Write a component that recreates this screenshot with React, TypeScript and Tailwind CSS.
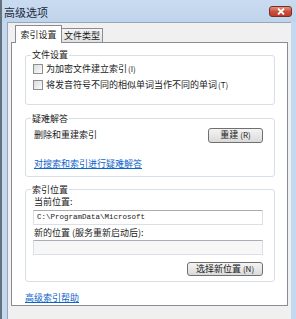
import React from "react";

const Checkbox = ({ label, hot }: { label: string; hot: string }) => (
  <div className="flex items-center h-[10px]">
    <div className="w-[10px] h-[10px] border border-[#8e8f8f] bg-linear-to-br from-[#dcdcdc] to-[#fbfbfb] shrink-0" />
    <span className="ml-[3px] whitespace-nowrap">
      {label}
      <span className="text-[8px] ml-[1px]">({hot})</span>
    </span>
  </div>
);

const Btn = ({ w, h, children }: { w: string; h: string; children: React.ReactNode }) => (
  <div
    className={`${w} ${h} rounded-[3px] border border-[#707070] bg-linear-to-b from-[#f4f4f4] to-[#dadada] flex items-center justify-center whitespace-nowrap`}
  >
    {children}
  </div>
);

export default function App() {
  return (
    <div className="w-[296px] h-[319px] overflow-hidden flex flex-col bg-[#c4d8ef] border-l-[2px] border-[#66717e] font-['Noto_Sans_CJK_SC',sans-serif] text-[9px] leading-[10px] text-[#1a1a1a]">
      {/* title bar */}
      <div className="h-[22px] shrink-0 flex items-start justify-between pl-[2px] pr-[4px] bg-linear-to-b from-[#c9dbf0] to-[#bfd4ed]">
        <span className="mt-[6px] text-[11px] leading-[12px] text-[#1e2a3a]">高级选项</span>
        <div className="mt-[6px] w-[23px] h-[11px] rounded-[3px] border border-[#7a2e22] bg-linear-to-b from-[#e3917f] via-[#c9503c] to-[#c0392b] flex items-center justify-center">
          <svg width="8" height="7" viewBox="0 0 8 7">
            <path d="M1 0.5 L7 6.5 M7 0.5 L1 6.5" stroke="#ffffff" strokeWidth="1.8" />
          </svg>
        </div>
      </div>

      {/* client area */}
      <div className="flex-1 ml-[5px] mr-[5px] bg-[#f0f0f0] border-l border-t border-[#9aa6b4] pt-[2px]">
        {/* tabs */}
        <div className="flex items-end h-[17px] pl-[7px]">
          <div className="relative z-10 -mb-px w-[47px] h-[18px] bg-white border border-b-0 border-[#898c95] flex items-center justify-center">
            索引设置
          </div>
          <div className="w-[41px] h-[14px] bg-linear-to-b from-[#f4f4f4] to-[#e2e2e2] border border-l-0 border-b-0 border-[#898c95] flex items-center justify-center">
            文件类型
          </div>
        </div>

        {/* panel */}
        <div className="ml-[3px] w-[277px] h-[264px] border border-[#898c95] bg-white pl-[13px]">
          {/* group 1 */}
          <fieldset className="mt-[7px] w-[250px] border border-[#d5dfe5] rounded-[3px] p-0">
            <legend className="ml-[5px] px-[1px] leading-[10px]">文件设置</legend>
            <div className="pl-[7px] pr-[11px] pt-[4px] pb-[14px] flex flex-col gap-[5.5px]">
              <Checkbox label="为加密文件建立索引" hot="I" />
              <Checkbox label="将发音符号不同的相似单词当作不同的单词" hot="T" />
            </div>
          </fieldset>

          {/* group 2 */}
          <fieldset className="mt-[9px] w-[250px] border border-[#d5dfe5] rounded-[3px] p-0">
            <legend className="ml-[5px] px-[1px] leading-[10px]">疑难解答</legend>
            <div className="pl-[8px] pr-[11px] pt-[4px] pb-[7px] flex flex-col">
              <div className="flex items-center justify-between h-[15px]">
                <span>删除和重建索引</span>
                <Btn w="w-[55px]" h="h-[15px]">
                  重建<span className="text-[8px] ml-[2px]">(R)</span>
                </Btn>
              </div>
              <span className="mt-[16px] leading-[10px] text-[#0d64c8] underline underline-offset-[1px]">
                对搜索和索引进行疑难解答
              </span>
            </div>
          </fieldset>

          {/* group 3 */}
          <fieldset className="mt-[8px] w-[250px] border border-[#d5dfe5] rounded-[3px] p-0">
            <legend className="ml-[5px] px-[1px] leading-[10px]">索引位置</legend>
            <div className="pl-[7px] pr-[11px] pt-[2px] pb-[5px] flex flex-col">
              <span className="pl-[1px]">当前位置:</span>
              <div className="mt-[3px] h-[15px] border border-[#dbdfe6] border-t-[#abadb3] bg-white flex items-center pl-[3px] font-['Liberation_Mono',monospace] text-[7.5px] text-[#222]">
                C:\ProgramData\Microsoft
              </div>
              <span className="mt-[3px] pl-[1px]">新的位置 (服务重新启动后):</span>
              <div className="mt-[2px] h-[15px] border border-[#dbdfe6] border-t-[#abadb3] bg-[#f7f7f7]" />
              <div className="mt-[7px] flex justify-end">
                <Btn w="w-[76px]" h="h-[14px]">
                  选择新位置<span className="text-[8px] ml-[2px]">(N)</span>
                </Btn>
              </div>
            </div>
          </fieldset>

          <div className="mt-[11px] leading-[10px]">
            <span className="text-[#0d64c8] underline underline-offset-[1px]">高级索引帮助</span>
          </div>
        </div>
      </div>
    </div>
  );
}
